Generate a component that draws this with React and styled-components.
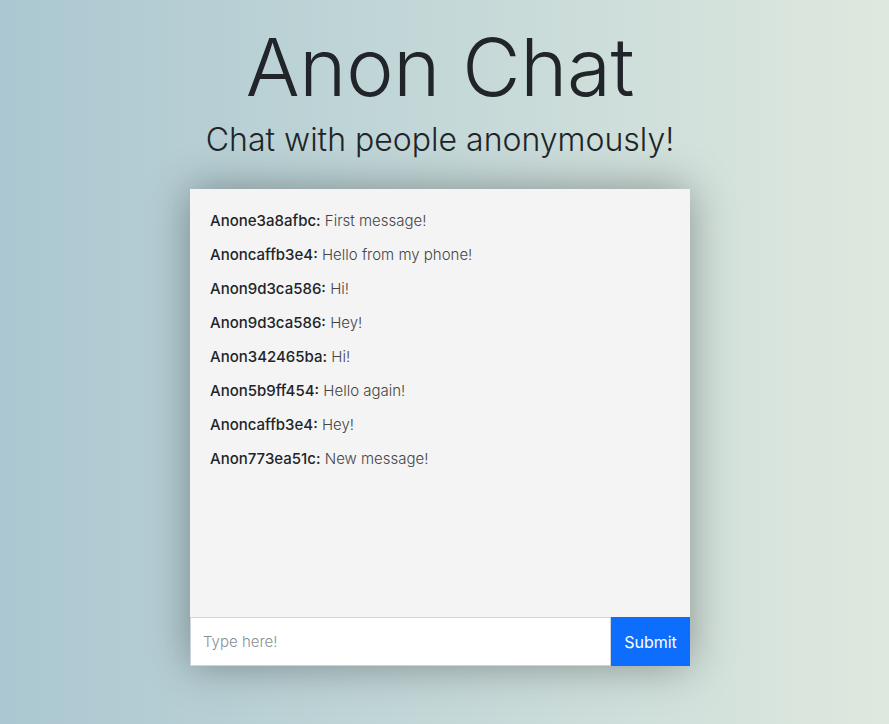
import React from "react";
import styled, { createGlobalStyle } from "styled-components";

const Global = createGlobalStyle`
  html, body { margin: 0; padding: 0; }
  body {
    min-height: 724px;
    background: linear-gradient(to right, #abc7d1 0%, #c4d8d8 50%, #dee8de 100%);
    font-family: Inter, "Open Sans", sans-serif;
    color: #212529;
  }
`;

const Page = styled.div`
  display: flex;
  flex-direction: column;
  align-items: center;
  padding: 19px 9px 0 0;
`;

const Title = styled.h1`
  margin: 0;
  font-size: 80px;
  font-weight: 300;
  line-height: 1.2;
  letter-spacing: -0.3px;
`;

const Subtitle = styled.h2`
  margin: 6px 0 30px;
  font-size: 32px;
  font-weight: 300;
  line-height: 1.2;
`;

const Card = styled.div`
  width: 500px;
  height: 477px;
  display: flex;
  flex-direction: column;
  background: #f4f4f4;
  box-shadow: 0 0 40px rgba(0, 0, 0, 0.35);
`;

const Messages = styled.div`
  flex: 1;
  padding: 21px 20px;
  display: flex;
  flex-direction: column;
  gap: 12px;
`;

const Message = styled.div`
  font-size: 15px;
  line-height: 22px;
  color: #444;
  font-weight: 300;
`;

const Name = styled.span`
  font-weight: 500;
  color: #212529;
`;

const Form = styled.form`
  display: flex;
  height: 49px;
`;

const Input = styled.input`
  flex: 1;
  border: 1px solid #ced4da;
  background: #fff;
  padding: 0 12px;
  font-family: inherit;
  font-size: 15px;
  font-weight: 300;
  outline: none;
  &::placeholder { color: #8a8f94; }
`;

const Button = styled.button`
  width: 79px;
  border: none;
  background: #0d6efd;
  color: #fff;
  font-family: inherit;
  font-size: 16px;
  font-weight: 400;
`;

const messages = [
  ["Anone3a8afbc", "First message!"],
  ["Anoncaffb3e4", "Hello from my phone!"],
  ["Anon9d3ca586", "Hi!"],
  ["Anon9d3ca586", "Hey!"],
  ["Anon342465ba", "Hi!"],
  ["Anon5b9ff454", "Hello again!"],
  ["Anoncaffb3e4", "Hey!"],
  ["Anon773ea51c", "New message!"],
];

export default function App() {
  return (
    <>
      <Global />
      <Page>
        <Title>Anon Chat</Title>
        <Subtitle>Chat with people anonymously!</Subtitle>
        <Card>
          <Messages>
            {messages.map(([n, t], i) => (
              <Message key={i}>
                <Name>{n}:</Name> {t}
              </Message>
            ))}
          </Messages>
          <Form onSubmit={(e) => e.preventDefault()}>
            <Input placeholder="Type here!" />
            <Button type="submit">Submit</Button>
          </Form>
        </Card>
      </Page>
    </>
  );
}
